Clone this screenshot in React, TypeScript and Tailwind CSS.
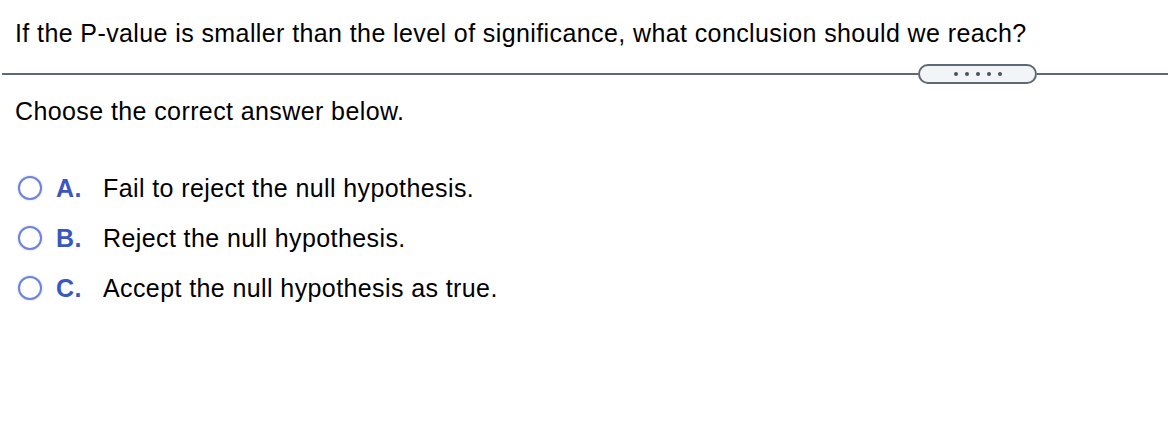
import React from 'react';

const options = [
  { letter: 'A.', text: 'Fail to reject the null hypothesis.' },
  { letter: 'B.', text: 'Reject the null hypothesis.' },
  { letter: 'C.', text: 'Accept the null hypothesis as true.' },
];

export default function App() {
  return (
    <div className="w-[1168px] h-[446px] bg-white text-black font-['Liberation_Sans',Arial,sans-serif] text-[25px] leading-[28px] tracking-[0.4px]">
      <p className="pt-[19px] pl-[15px]">
        If the P-value is smaller than the level of significance, what conclusion should we reach?
      </p>

      {/* divider with expand pill */}
      <div className="mt-[17px] flex items-center h-[20px]">
        <div className="flex-1 h-[2px] ml-[2px] bg-[#5e6975]" />
        <div className="w-[119px] h-[20px] rounded-full border-2 border-[#5e6975] bg-[#f3f4f7] flex items-center justify-center gap-[7px]">
          {[0, 1, 2, 3, 4].map((i) => (
            <span key={i} className="w-[4px] h-[4px] rounded-full bg-[#4a525c]" />
          ))}
        </div>
        <div className="w-[131px] h-[2px] bg-[#5e6975]" />
      </div>

      <p className="mt-[13px] pl-[15px]">Choose the correct answer below.</p>

      <div className="mt-[49px] pl-[18px] flex flex-col gap-[22px]">
        {options.map((o) => (
          <div key={o.letter} className="flex items-center h-[28px]">
            <span className="w-[24px] h-[24px] rounded-full border-2 border-[#6f84d8] shadow-[0_0_2px_rgba(90,110,210,0.45)] bg-white shrink-0" />
            <span className="ml-[14px] w-[47px] font-bold text-[#3a56bf]">{o.letter}</span>
            <span>{o.text}</span>
          </div>
        ))}
      </div>
    </div>
  );
}
